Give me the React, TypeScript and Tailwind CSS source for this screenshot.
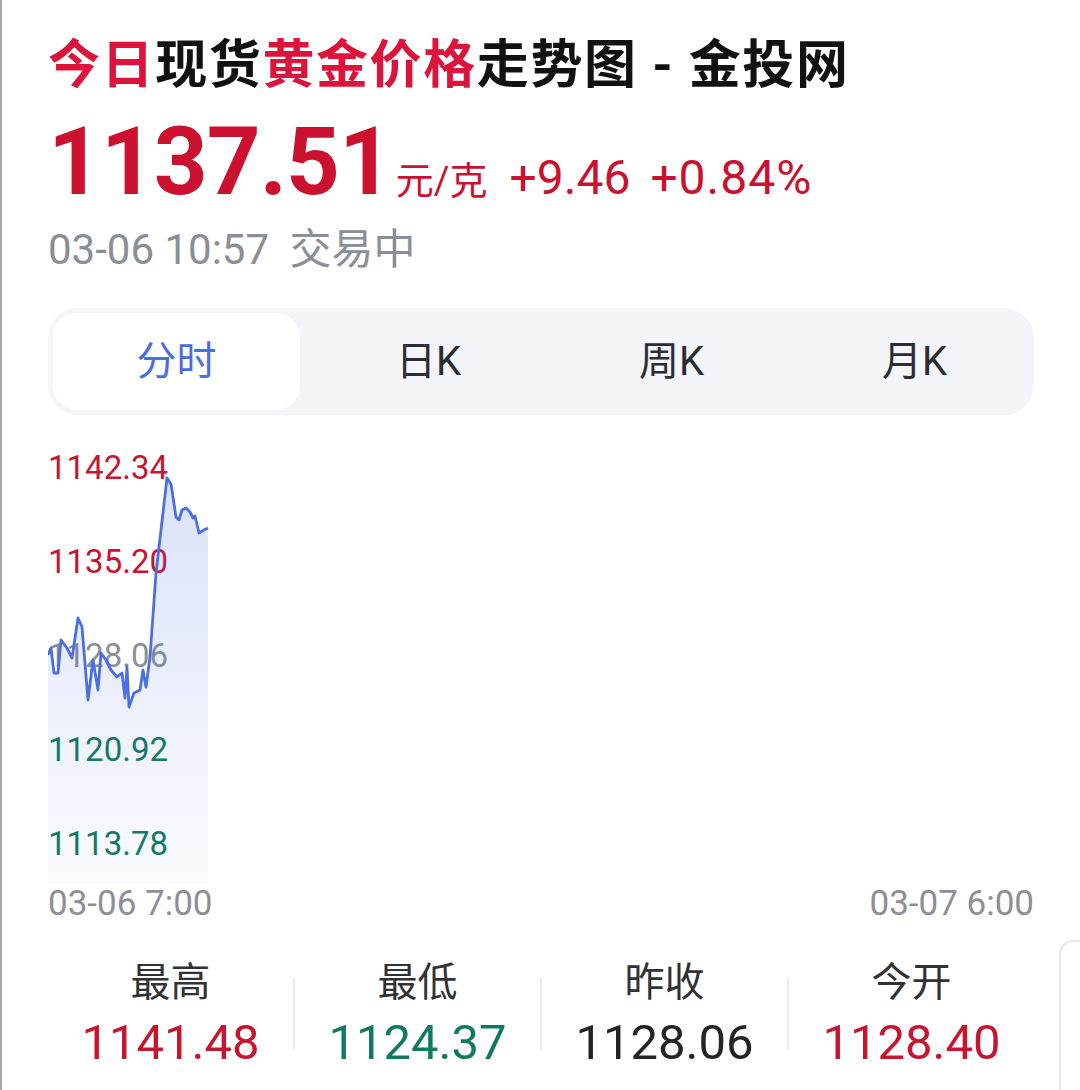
import React from 'react';

const FONT = { fontFamily: "Roboto, 'Noto Sans CJK SC', sans-serif" };

// 分时 line, in chart-box pixels (box is 986 x 436)
const points: [number, number][] = [
  [0, 207], [3, 200], [6, 225], [10, 225], [13, 192], [19, 200], [24, 210], [30, 170],
  [34, 179], [40, 252], [45, 212], [50, 242], [53, 205], [58, 212], [63, 222], [69, 229],
  [74, 225], [77, 250], [79, 219], [81, 259], [86, 245], [92, 242], [95, 222], [98, 239],
  [102, 209], [108, 125], [113, 82], [119, 30], [123, 36], [128, 69], [131, 72], [134, 62],
  [138, 60], [142, 64], [145, 70], [147, 68], [151, 85], [156, 82], [160, 80],
];

const yLabels = [
  { v: '1142.34', c: 'text-[#c8142e]' },
  { v: '1135.20', c: 'text-[#c8142e]' },
  { v: '1128.06', c: 'text-[#8c8f95]' },
  { v: '1120.92', c: 'text-[#0f7a60]' },
  { v: '1113.78', c: 'text-[#0f7a60]' },
];

const tabs = ['分时', '日K', '周K', '月K'];

const stats = [
  { label: '最高', value: '1141.48', c: 'text-[#c8142e]' },
  { label: '最低', value: '1124.37', c: 'text-[#0f7a60]' },
  { label: '昨收', value: '1128.06', c: 'text-[#222428]' },
  { label: '今开', value: '1128.40', c: 'text-[#c8142e]' },
];

function Chart() {
  const line = points.map(([x, y]) => `${x},${y}`).join(' ');
  const last = points[points.length - 1];
  const area = `0,436 ${line} ${last[0]},436`;
  return (
    <div className="relative h-[436px] mt-[33px]">
      <div className="absolute left-0 top-0 h-[416px] flex flex-col justify-between">
        {yLabels.map((l) => (
          <div key={l.v} className={`text-[33px] leading-[40px] ${l.c}`}>
            {l.v}
          </div>
        ))}
      </div>
      <svg className="absolute inset-0" width="986" height="436" viewBox="0 0 986 436">
        <defs>
          <linearGradient id="fill" x1="0" y1="0" x2="0" y2="1">
            <stop offset="0%" stopColor="#4b6fe3" stopOpacity="0.2" />
            <stop offset="100%" stopColor="#4b6fe3" stopOpacity="0.02" />
          </linearGradient>
        </defs>
        <polygon points={area} fill="url(#fill)" />
        <polyline points={line} fill="none" stroke="#4b6fe3" strokeWidth="2.8" strokeLinejoin="round" />
      </svg>
    </div>
  );
}

export default function App() {
  return (
    <div
      className="w-[1080px] h-[1090px] overflow-hidden bg-white border-l-2 border-[#a6a6a6] pl-[46px]"
      style={FONT}
    >
      <div className="w-[986px]">
        <h1 className="mt-[32px] text-[52px] leading-[68px] font-bold text-[#111] tracking-[1.6px]">
          <span className="text-[#dc143c]">今日</span>现货
          <span className="text-[#dc143c]">黄金价格</span>走势图 - 金投网
        </h1>

        <div className="mt-[15px] flex items-baseline h-[94px] leading-none">
          <span className="text-[94px] font-bold text-[#cc1030] tracking-[-1px]">1137.51</span>
          <span className="ml-[4px] text-[38px] text-[#cc1030]">元/克</span>
          <span className="ml-[22px] text-[48px] text-[#cc1030]">+9.46</span>
          <span className="ml-[20px] text-[48px] text-[#cc1030] tracking-[1px]">+0.84%</span>
        </div>

        <div className="mt-[17px] text-[42px] leading-[48px] text-[#8a8e96]">
          03-06 10:57 <span className="ml-[10px]">交易中</span>
        </div>

        <div className="mt-[34px] h-[107px] rounded-[30px] bg-[#f3f5f9] p-[5px] flex">
          {tabs.map((t, i) => (
            <div
              key={t}
              className={`flex items-center justify-center text-[40px] ${
                i === 0
                  ? 'w-[247px] bg-white rounded-[24px] text-[#4a6ee0]'
                  : 'flex-1 text-[#2a2d33] pl-[14px]'
              }`}
            >
              {t}
            </div>
          ))}
        </div>

        <Chart />

        <div className="flex justify-between text-[35px] leading-[40px] text-[#8c8f95]">
          <span>03-06 7:00</span>
          <span>03-07 6:00</span>
        </div>
      </div>

      <div className="mt-[16px] flex gap-[25px]">
        <div className="w-[986px] shrink-0 flex pt-[19px]">
          {stats.map((s, i) => (
            <React.Fragment key={s.label}>
              {i > 0 && <div className="w-[2px] h-[72px] mt-[19px] bg-[#ececec]" />}
              <div className="flex-1 flex flex-col items-center">
                <div className="text-[40px] leading-[48px] text-[#303236]">{s.label}</div>
                <div className={`mt-[8px] text-[49px] leading-[56px] ${s.c}`}>{s.value}</div>
              </div>
            </React.Fragment>
          ))}
        </div>
        <div className="w-[200px] h-[200px] shrink-0 rounded-[14px] border-2 border-[#e8e8e8]" />
      </div>
    </div>
  );
}
